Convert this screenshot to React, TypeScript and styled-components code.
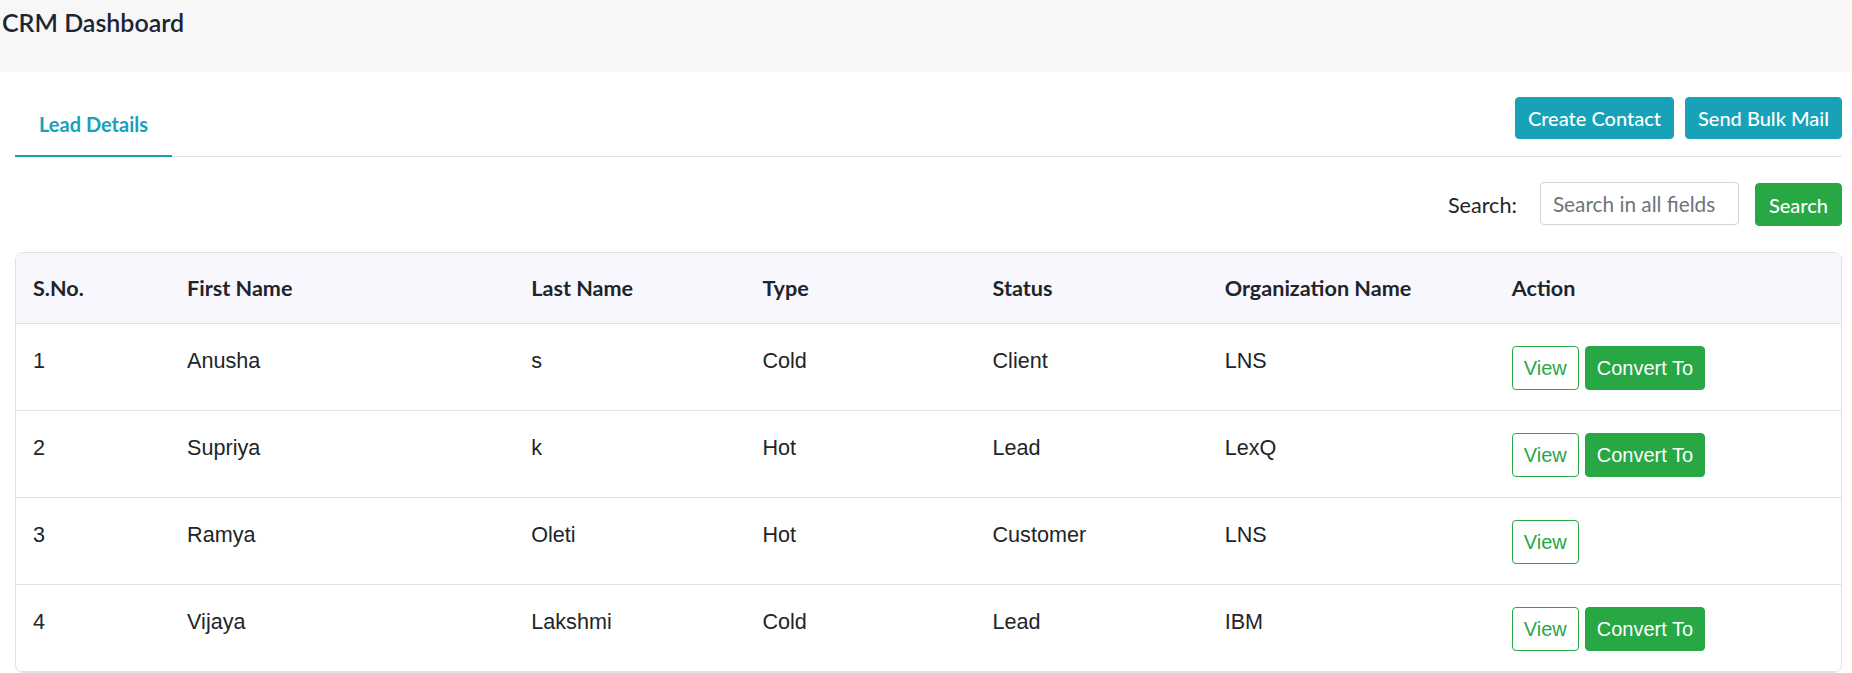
import React from "react";
import styled, { createGlobalStyle } from "styled-components";

const GlobalStyle = createGlobalStyle`
  html, body { margin: 0; padding: 0; background: #ffffff; }
  body { font-family: Lato, "Open Sans", Arial, sans-serif; color: #212529; }
  * { box-sizing: border-box; }
`;

const Page = styled.div`
  width: 1852px;
  min-height: 673px;
`;

const TopBar = styled.header`
  height: 72px;
  background: #f7f7f7;
  padding: 7px 2px 0;
`;

const Title = styled.h1`
  margin: 0;
  font-family: Lato, sans-serif;
  font-size: 25px;
  line-height: 30px;
  font-weight: 600;
  color: #1d2433;
`;

const Content = styled.main`
  padding: 0 10px 0 15px;
`;

const TabRow = styled.div`
  margin-top: 22px;
  display: flex;
  justify-content: space-between;
  align-items: flex-start;
  border-bottom: 1px solid #dee2e6;
`;

const Tab = styled.div`
  padding: 18px 24px 19px;
  font-size: 20px;
  line-height: 24px;
  font-weight: 700;
  color: #17a2b8;
  border-bottom: 2px solid #17a2b8;
  margin-bottom: -1px;
`;

const ButtonGroup = styled.div`
  display: flex;
  gap: 11px;
  margin-top: 3px;
`;

const SolidButton = styled.button<{ $tone: "info" | "success" }>`
  font-family: Lato, sans-serif;
  font-size: 20px;
  line-height: 24px;
  font-weight: 500;
  padding: 8px 12px;
  border-radius: 4px;
  color: #ffffff;
  border: 1px solid ${(p) => (p.$tone === "info" ? "#17a2b8" : "#28a745")};
  background: ${(p) => (p.$tone === "info" ? "#17a2b8" : "#28a745")};
  cursor: pointer;
`;

const SearchRow = styled.div`
  margin-top: 26px;
  display: flex;
  justify-content: flex-end;
  align-items: center;
`;

const SearchLabel = styled.label`
  font-size: 21.6px;
  line-height: 26px;
  margin-right: 23px;
  color: #212529;
`;

const SearchInput = styled.input`
  width: 199px;
  height: 43px;
  padding: 0 12px;
  font-family: Lato, sans-serif;
  font-size: 20.8px;
  color: #495057;
  border: 1px solid #ced4da;
  border-radius: 4px;
  margin-right: 16px;
  margin-top: -2px;
  &::placeholder { color: #6c757d; }
`;

const SearchButton = styled(SolidButton)`
  height: 43px;
  padding: 0 13px;
`;

const TableCard = styled.div`
  margin-top: 26px;
  border: 1px solid #dee2e6;
  border-radius: 8px;
  overflow: hidden;
`;

const Table = styled.table`
  width: 100%;
  border-collapse: collapse;
  table-layout: fixed;
`;

const HeadCell = styled.th`
  text-align: left;
  padding: 22px 17px;
  font-family: Lato, sans-serif;
  font-size: 21.6px;
  line-height: 26px;
  font-weight: 700;
  color: #212529;
  background: #f8f7fe;
  border-bottom: 1px solid #dee2e6;
`;

const Cell = styled.td`
  vertical-align: top;
  padding: 22px 17px 20px;
  font-family: "Liberation Sans", Arial, sans-serif;
  font-size: 21.6px;
  line-height: 30px;
  color: #212529;
  border-bottom: 1px solid #dee2e6;
`;

const Actions = styled.div`
  display: flex;
  gap: 6px;
`;

const RowButton = styled.button<{ $variant: "outline" | "solid" }>`
  font-family: "Liberation Sans", Arial, sans-serif;
  font-size: 20px;
  line-height: 30px;
  padding: 6px 11px;
  border-radius: 4px;
  border: 1px solid #28a745;
  color: ${(p) => (p.$variant === "outline" ? "#28a745" : "#ffffff")};
  background: ${(p) => (p.$variant === "outline" ? "#ffffff" : "#28a745")};
  cursor: pointer;
`;

const columns = [
  { label: "S.No.", width: 154 },
  { label: "First Name", width: 344 },
  { label: "Last Name", width: 231 },
  { label: "Type", width: 230 },
  { label: "Status", width: 232 },
  { label: "Organization Name", width: 287 },
  { label: "Action", width: 346 },
];

const rows = [
  { first: "Anusha", last: "s", type: "Cold", status: "Client", org: "LNS", convert: true },
  { first: "Supriya", last: "k", type: "Hot", status: "Lead", org: "LexQ", convert: true },
  { first: "Ramya", last: "Oleti", type: "Hot", status: "Customer", org: "LNS", convert: false },
  { first: "Vijaya", last: "Lakshmi", type: "Cold", status: "Lead", org: "IBM", convert: true },
];

export default function App() {
  return (
    <Page>
      <GlobalStyle />
      <TopBar>
        <Title>CRM Dashboard</Title>
      </TopBar>
      <Content>
        <TabRow>
          <Tab>Lead Details</Tab>
          <ButtonGroup>
            <SolidButton $tone="info">Create Contact</SolidButton>
            <SolidButton $tone="info">Send Bulk Mail</SolidButton>
          </ButtonGroup>
        </TabRow>
        <SearchRow>
          <SearchLabel htmlFor="search">Search:</SearchLabel>
          <SearchInput id="search" placeholder="Search in all fields" />
          <SearchButton $tone="success">Search</SearchButton>
        </SearchRow>
        <TableCard>
          <Table>
            <colgroup>
              {columns.map((c) => (
                <col key={c.label} style={{ width: c.width }} />
              ))}
            </colgroup>
            <thead>
              <tr>
                {columns.map((c) => (
                  <HeadCell key={c.label}>{c.label}</HeadCell>
                ))}
              </tr>
            </thead>
            <tbody>
              {rows.map((r, i) => (
                <tr key={i}>
                  <Cell>{i + 1}</Cell>
                  <Cell>{r.first}</Cell>
                  <Cell>{r.last}</Cell>
                  <Cell>{r.type}</Cell>
                  <Cell>{r.status}</Cell>
                  <Cell>{r.org}</Cell>
                  <Cell>
                    <Actions>
                      <RowButton $variant="outline">View</RowButton>
                      {r.convert && <RowButton $variant="solid">Convert To</RowButton>}
                    </Actions>
                  </Cell>
                </tr>
              ))}
            </tbody>
          </Table>
        </TableCard>
      </Content>
    </Page>
  );
}
